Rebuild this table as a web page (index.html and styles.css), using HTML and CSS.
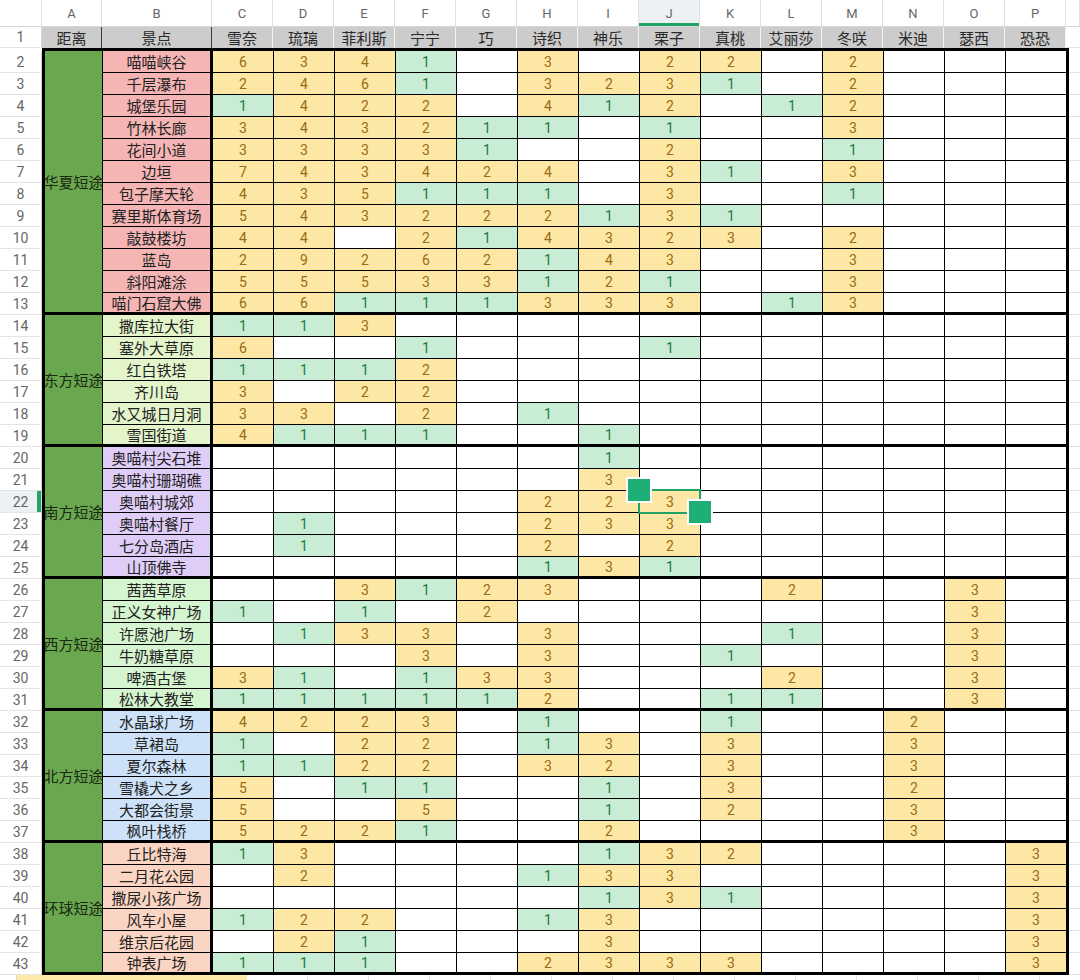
FILE: index.html
```html
<!DOCTYPE html>
<html lang="zh">
<head>
<meta charset="utf-8">
<title>短途景点表</title>
<link rel="stylesheet" href="styles.css">
</head>
<body>
<div class="colhdr">
  <div></div><div>A</div><div>B</div><div>C</div><div>D</div><div>E</div><div>F</div><div>G</div><div>H</div><div>I</div><div class="on">J</div><div>K</div><div>L</div><div>M</div><div>N</div><div>O</div><div>P</div><div></div>
</div>
<div class="hdr">
  <div class="rn">1</div><div class="k">距离</div><div class="k">景点</div><div>雪奈</div><div>琉璃</div><div>菲利斯</div><div>宁宁</div><div>巧</div><div>诗织</div><div>神乐</div><div>栗子</div><div>真桃</div><div>艾丽莎</div><div>冬咲</div><div>米迪</div><div>瑟西</div><div>恐恐</div><div class="hrest"></div>
</div>

<div class="grp first">
  <div class="rns"><div class="rn">2</div><div class="rn">3</div><div class="rn">4</div><div class="rn">5</div><div class="rn">6</div><div class="rn">7</div><div class="rn">8</div><div class="rn">9</div><div class="rn">10</div><div class="rn">11</div><div class="rn">12</div><div class="rn">13</div></div>
  <div class="blk r12">
    <div class="a">华夏短途</div>
    <div class="b hx">喵喵峡谷</div><div class="y">6</div><div class="y">3</div><div class="y">4</div><div class="g">1</div><div></div><div class="y">3</div><div></div><div class="y">2</div><div class="y">2</div><div></div><div class="y">2</div><div></div><div></div><div></div>
    <div class="b hx">千层瀑布</div><div class="y">2</div><div class="y">4</div><div class="y">6</div><div class="g">1</div><div></div><div class="y">3</div><div class="y">2</div><div class="y">3</div><div class="g">1</div><div></div><div class="y">2</div><div></div><div></div><div></div>
    <div class="b hx">城堡乐园</div><div class="g">1</div><div class="y">4</div><div class="y">2</div><div class="y">2</div><div></div><div class="y">4</div><div class="g">1</div><div class="y">2</div><div></div><div class="g">1</div><div class="y">2</div><div></div><div></div><div></div>
    <div class="b hx">竹林长廊</div><div class="y">3</div><div class="y">4</div><div class="y">3</div><div class="y">2</div><div class="g">1</div><div class="g">1</div><div></div><div class="g">1</div><div></div><div></div><div class="y">3</div><div></div><div></div><div></div>
    <div class="b hx">花间小道</div><div class="y">3</div><div class="y">3</div><div class="y">3</div><div class="y">3</div><div class="g">1</div><div></div><div></div><div class="y">2</div><div></div><div></div><div class="g">1</div><div></div><div></div><div></div>
    <div class="b hx">边垣</div><div class="y">7</div><div class="y">4</div><div class="y">3</div><div class="y">4</div><div class="y">2</div><div class="y">4</div><div></div><div class="y">3</div><div class="g">1</div><div></div><div class="y">3</div><div></div><div></div><div></div>
    <div class="b hx">包子摩天轮</div><div class="y">4</div><div class="y">3</div><div class="y">5</div><div class="g">1</div><div class="g">1</div><div class="g">1</div><div></div><div class="y">3</div><div></div><div></div><div class="g">1</div><div></div><div></div><div></div>
    <div class="b hx">赛里斯体育场</div><div class="y">5</div><div class="y">4</div><div class="y">3</div><div class="y">2</div><div class="y">2</div><div class="y">2</div><div class="g">1</div><div class="y">3</div><div class="g">1</div><div></div><div></div><div></div><div></div><div></div>
    <div class="b hx">敲鼓楼坊</div><div class="y">4</div><div class="y">4</div><div></div><div class="y">2</div><div class="g">1</div><div class="y">4</div><div class="y">3</div><div class="y">2</div><div class="y">3</div><div></div><div class="y">2</div><div></div><div></div><div></div>
    <div class="b hx">蓝岛</div><div class="y">2</div><div class="y">9</div><div class="y">2</div><div class="y">6</div><div class="y">2</div><div class="g">1</div><div class="y">4</div><div class="y">3</div><div></div><div></div><div class="y">3</div><div></div><div></div><div></div>
    <div class="b hx">斜阳滩涂</div><div class="y">5</div><div class="y">5</div><div class="y">5</div><div class="y">3</div><div class="y">3</div><div class="g">1</div><div class="y">2</div><div class="g">1</div><div></div><div></div><div class="y">3</div><div></div><div></div><div></div>
    <div class="b hx">喵门石窟大佛</div><div class="y">6</div><div class="y">6</div><div class="g">1</div><div class="g">1</div><div class="g">1</div><div class="y">3</div><div class="y">3</div><div class="y">3</div><div></div><div class="g">1</div><div class="y">3</div><div></div><div></div><div></div>
  </div>
  <div class="rest"></div>
</div>

<div class="grp">
  <div class="rns"><div class="rn">14</div><div class="rn">15</div><div class="rn">16</div><div class="rn">17</div><div class="rn">18</div><div class="rn">19</div></div>
  <div class="blk r6">
    <div class="a">东方短途</div>
    <div class="b df">撒库拉大街</div><div class="g">1</div><div class="g">1</div><div class="y">3</div><div></div><div></div><div></div><div></div><div></div><div></div><div></div><div></div><div></div><div></div><div></div>
    <div class="b df">塞外大草原</div><div class="y">6</div><div></div><div></div><div class="g">1</div><div></div><div></div><div></div><div class="g">1</div><div></div><div></div><div></div><div></div><div></div><div></div>
    <div class="b df">红白铁塔</div><div class="g">1</div><div class="g">1</div><div class="g">1</div><div class="y">2</div><div></div><div></div><div></div><div></div><div></div><div></div><div></div><div></div><div></div><div></div>
    <div class="b df">齐川岛</div><div class="y">3</div><div></div><div class="y">2</div><div class="y">2</div><div></div><div></div><div></div><div></div><div></div><div></div><div></div><div></div><div></div><div></div>
    <div class="b df">水又城日月洞</div><div class="y">3</div><div class="y">3</div><div></div><div class="y">2</div><div></div><div class="g">1</div><div></div><div></div><div></div><div></div><div></div><div></div><div></div><div></div>
    <div class="b df">雪国街道</div><div class="y">4</div><div class="g">1</div><div class="g">1</div><div class="g">1</div><div></div><div></div><div class="g">1</div><div></div><div></div><div></div><div></div><div></div><div></div><div></div>
  </div>
  <div class="rest"></div>
</div>

<div class="grp">
  <div class="rns"><div class="rn">20</div><div class="rn">21</div><div class="rn cur">22</div><div class="rn">23</div><div class="rn">24</div><div class="rn">25</div></div>
  <div class="blk r6">
    <div class="a">南方短途</div>
    <div class="b nf">奥喵村尖石堆</div><div></div><div></div><div></div><div></div><div></div><div></div><div class="g">1</div><div></div><div></div><div></div><div></div><div></div><div></div><div></div>
    <div class="b nf">奥喵村珊瑚礁</div><div></div><div></div><div></div><div></div><div></div><div></div><div class="y">3</div><div></div><div></div><div></div><div></div><div></div><div></div><div></div>
    <div class="b nf">奥喵村城郊</div><div></div><div></div><div></div><div></div><div></div><div class="y">2</div><div class="y">2</div><div class="y sel">3<span class="hd tl"></span><span class="hd br"></span></div><div></div><div></div><div></div><div></div><div></div><div></div>
    <div class="b nf">奥喵村餐厅</div><div></div><div class="g">1</div><div></div><div></div><div></div><div class="y">2</div><div class="y">3</div><div class="y">3</div><div></div><div></div><div></div><div></div><div></div><div></div>
    <div class="b nf">七分岛酒店</div><div></div><div class="g">1</div><div></div><div></div><div></div><div class="y">2</div><div></div><div class="y">2</div><div></div><div></div><div></div><div></div><div></div><div></div>
    <div class="b nf">山顶佛寺</div><div></div><div></div><div></div><div></div><div></div><div class="g">1</div><div class="y">3</div><div class="g">1</div><div></div><div></div><div></div><div></div><div></div><div></div>
  </div>
  <div class="rest"></div>
</div>

<div class="grp">
  <div class="rns"><div class="rn">26</div><div class="rn">27</div><div class="rn">28</div><div class="rn">29</div><div class="rn">30</div><div class="rn">31</div></div>
  <div class="blk r6">
    <div class="a">西方短途</div>
    <div class="b xf">茜茜草原</div><div></div><div></div><div class="y">3</div><div class="g">1</div><div class="y">2</div><div class="y">3</div><div></div><div></div><div></div><div class="y">2</div><div></div><div></div><div class="y">3</div><div></div>
    <div class="b xf">正义女神广场</div><div class="g">1</div><div></div><div class="g">1</div><div></div><div class="y">2</div><div></div><div></div><div></div><div></div><div></div><div></div><div></div><div class="y">3</div><div></div>
    <div class="b xf">许愿池广场</div><div></div><div class="g">1</div><div class="y">3</div><div class="y">3</div><div></div><div class="y">3</div><div></div><div></div><div></div><div class="g">1</div><div></div><div></div><div class="y">3</div><div></div>
    <div class="b xf">牛奶糖草原</div><div></div><div></div><div></div><div class="y">3</div><div></div><div class="y">3</div><div></div><div></div><div class="g">1</div><div></div><div></div><div></div><div class="y">3</div><div></div>
    <div class="b xf">啤酒古堡</div><div class="y">3</div><div class="g">1</div><div></div><div class="g">1</div><div class="y">3</div><div class="y">3</div><div></div><div></div><div></div><div class="y">2</div><div></div><div></div><div class="y">3</div><div></div>
    <div class="b xf">松林大教堂</div><div class="g">1</div><div class="g">1</div><div class="g">1</div><div class="g">1</div><div class="g">1</div><div class="y">2</div><div></div><div></div><div class="g">1</div><div class="g">1</div><div></div><div></div><div class="y">3</div><div></div>
  </div>
  <div class="rest"></div>
</div>

<div class="grp">
  <div class="rns"><div class="rn">32</div><div class="rn">33</div><div class="rn">34</div><div class="rn">35</div><div class="rn">36</div><div class="rn">37</div></div>
  <div class="blk r6">
    <div class="a">北方短途</div>
    <div class="b bf">水晶球广场</div><div class="y">4</div><div class="y">2</div><div class="y">2</div><div class="y">3</div><div></div><div class="g">1</div><div></div><div></div><div class="g">1</div><div></div><div></div><div class="y">2</div><div></div><div></div>
    <div class="b bf">草裙岛</div><div class="g">1</div><div></div><div class="y">2</div><div class="y">2</div><div></div><div class="g">1</div><div class="y">3</div><div></div><div class="y">3</div><div></div><div></div><div class="y">3</div><div></div><div></div>
    <div class="b bf">夏尔森林</div><div class="g">1</div><div class="g">1</div><div class="y">2</div><div class="y">2</div><div></div><div class="y">3</div><div class="y">2</div><div></div><div class="y">3</div><div></div><div></div><div class="y">3</div><div></div><div></div>
    <div class="b bf">雪橇犬之乡</div><div class="y">5</div><div></div><div class="g">1</div><div class="g">1</div><div></div><div></div><div class="g">1</div><div></div><div class="y">3</div><div></div><div></div><div class="y">2</div><div></div><div></div>
    <div class="b bf">大都会街景</div><div class="y">5</div><div></div><div></div><div class="y">5</div><div></div><div></div><div class="g">1</div><div></div><div class="y">2</div><div></div><div></div><div class="y">3</div><div></div><div></div>
    <div class="b bf">枫叶栈桥</div><div class="y">5</div><div class="y">2</div><div class="y">2</div><div class="g">1</div><div></div><div></div><div class="y">2</div><div></div><div></div><div></div><div></div><div class="y">3</div><div></div><div></div>
  </div>
  <div class="rest"></div>
</div>

<div class="grp">
  <div class="rns"><div class="rn">38</div><div class="rn">39</div><div class="rn">40</div><div class="rn">41</div><div class="rn">42</div><div class="rn">43</div></div>
  <div class="blk r6">
    <div class="a">环球短途</div>
    <div class="b hq">丘比特海</div><div class="g">1</div><div class="y">3</div><div></div><div></div><div></div><div></div><div class="g">1</div><div class="y">3</div><div class="y">2</div><div></div><div></div><div></div><div></div><div class="y">3</div>
    <div class="b hq">二月花公园</div><div></div><div class="y">2</div><div></div><div></div><div></div><div class="g">1</div><div class="y">3</div><div class="y">3</div><div></div><div></div><div></div><div></div><div></div><div class="y">3</div>
    <div class="b hq">撒尿小孩广场</div><div></div><div></div><div></div><div></div><div></div><div></div><div class="g">1</div><div class="y">3</div><div class="g">1</div><div></div><div></div><div></div><div></div><div class="y">3</div>
    <div class="b hq">风车小屋</div><div class="g">1</div><div class="y">2</div><div class="y">2</div><div></div><div></div><div class="g">1</div><div class="y">3</div><div></div><div></div><div></div><div></div><div></div><div></div><div class="y">3</div>
    <div class="b hq">维京后花园</div><div></div><div class="y">2</div><div class="g">1</div><div></div><div></div><div></div><div class="y">3</div><div></div><div></div><div></div><div></div><div></div><div></div><div class="y">3</div>
    <div class="b hq">钟表广场</div><div class="g">1</div><div class="g">1</div><div class="g">1</div><div></div><div></div><div class="y">2</div><div class="y">3</div><div class="y">3</div><div class="y">3</div><div></div><div></div><div></div><div></div><div class="y">3</div>
  </div>
  <div class="rest"></div>
</div>

<div class="last">
  <div class="rn">44</div>
  <div class="note">注：数字代表出现次数　　　 数据仅供参考</div>
  <div class="fill"></div>
</div>
</body>
</html>
```

FILE: styles.css
```css
* { box-sizing: border-box; }
html, body { margin: 0; padding: 0; background: #fff; overflow: hidden; }
body {
  width: 1080px;
  height: 980px;
  font-family: Roboto, "Noto Sans CJK SC", sans-serif;
  font-size: 14px;
  color: #222;
}

/* column letters */
.colhdr {
  display: grid;
  grid-template-columns: 42px 60px 110px repeat(14, 61px) 1fr;
  height: 27px;
}
.colhdr div {
  display: flex;
  align-items: center;
  justify-content: center;
  color: #666;
  font-size: 13px;
  border-right: 1px solid #e0e0e0;
  border-bottom: 1px solid #d6d6d6;
}
.colhdr .on {
  background: #eef1f3;
  box-shadow: inset 0 -3px 0 #21a366;
}

/* row numbers */
.rn {
  height: 22px;
  flex: none;
  display: flex;
  align-items: center;
  justify-content: center;
  color: #666;
  font-size: 14px;
  background: #fff;
  border-right: 1px solid #d6d6d6;
  border-bottom: 1px solid #e4e4e4;
}
.rn.cur {
  background: #eef1f3;
  box-shadow: inset -4px 0 0 #21a366;
}

/* header row 1 */
.hdr {
  display: grid;
  grid-template-columns: 42px 60px 110px repeat(14, 61px) 1fr;
  height: 21px;
}
.hdr div {
  display: flex;
  align-items: center;
  justify-content: center;
  background: #cccccc;
  color: #2a2a2a;
  font-size: 15px;
  border-right: 1px solid #f2f2f2;
}
.hdr .rn { height: 21px; background: #fff; font-size: 14px; color: #666; border-right: 1px solid #d6d6d6; }
.hdr .k { border-right-color: #3a3a3a; }
.hdr .hrest { background: #fff; border-bottom: 1px solid #e4e4e4; border-right: 0; }

/* groups */
.grp { display: flex; }
.rns { width: 42px; flex: none; display: flex; flex-direction: column; }
.first .rns { padding-top: 3px; }

.blk {
  flex: none;
  display: grid;
  grid-template-columns: 57px 109px repeat(14, 60px);
  gap: 1px;
  background: #000;
  border: 3px solid #000;
  border-top: 0;
}
.first .blk { border-top: 3px solid #000; }
.r12 { grid-template-rows: repeat(11, 21px) 19px; }
.r6 { grid-template-rows: repeat(5, 21px) 19px; }

.blk > div {
  display: flex;
  align-items: center;
  justify-content: center;
  background: #fff;
  white-space: nowrap;
  font-size: 14px;
}
.blk .a {
  grid-column: 1;
  grid-row: 1 / -1;
  background: #6aa84f;
  color: #1b2812;
  font-size: 15px;
}
.blk .b {
  border-right: 2px solid #000;
  font-size: 15px;
  color: #222;
}
.blk .hx { background: #f5b5b5; }
.blk .df { background: #e4f5cb; }
.blk .nf { background: #dfcdf7; }
.blk .xf { background: #d5f4d0; }
.blk .bf { background: #cde2f8; }
.blk .hq { background: #fbd5c3; }

.blk .y { background: #fde7a4; color: #9a6b12; }
.blk .g { background: #c8ecd4; color: #1e7a3c; }

/* selection */
.blk .sel { position: relative; z-index: 2; overflow: visible; }
.sel::after {
  content: "";
  position: absolute;
  top: -2px;
  left: -2px;
  right: -1px;
  bottom: -2px;
  border: 2px solid #21a366;
}
.hd {
  position: absolute;
  width: 26px;
  height: 26px;
  background: #1fae76;
  border: 2px solid #fff;
  z-index: 3;
}
.hd.tl { left: -14px; top: -14px; }
.hd.br { right: -13px; bottom: -13px; }

.rest {
  flex: 1;
  background: repeating-linear-gradient(#fff 0 21px, #e4e4e4 21px 22px);
}
.first .rest { background-position: 0 3px; }

/* partial row 44 */
.last { display: flex; height: 22px; }
.note {
  width: 230px;
  flex: none;
  background: #fde9a8;
  color: #6b5a20;
  font-size: 14px;
  padding: 1px 0 0 12px;
  white-space: nowrap;
  overflow: hidden;
}
.fill {
  flex: 1;
  background: repeating-linear-gradient(to right, #fff 0 60px, #e4e4e4 60px 61px);
}
```
